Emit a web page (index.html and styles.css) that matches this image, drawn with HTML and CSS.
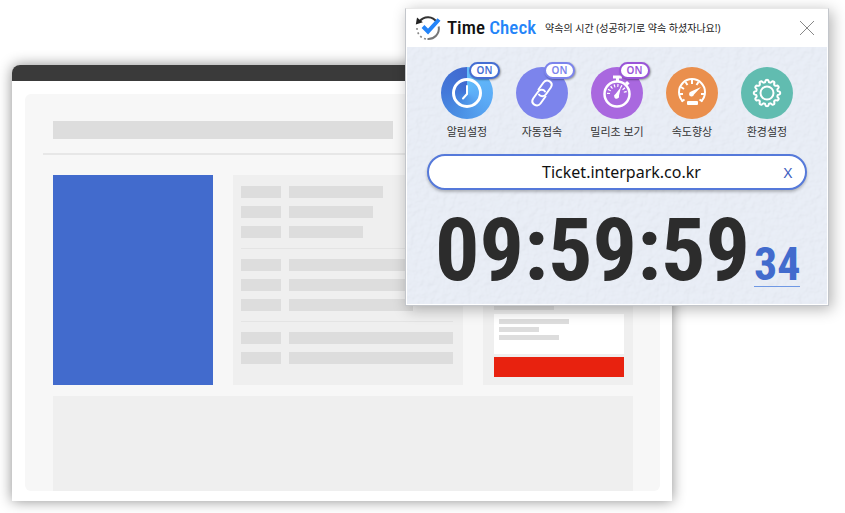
FILE: index.html
```html
<!DOCTYPE html>
<html lang="ko">
<head>
<meta charset="utf-8">
<title>Time Check</title>
<link rel="stylesheet" href="styles.css">
</head>
<body>
<main class="stage">
  <section class="browser" aria-hidden="true">
    <div class="browser-bar"></div>
    <div class="page">
      <div class="page-head"><div class="page-title"></div></div>
      <div class="columns">
        <div class="poster"></div>
        <div class="details">
          <div class="group">
            <div class="row"><i class="key"></i><i class="value w58"></i></div>
            <div class="row"><i class="key"></i><i class="value w52"></i></div>
            <div class="row"><i class="key"></i><i class="value w45"></i></div>
          </div>
          <div class="group">
            <div class="row"><i class="key"></i><i class="value"></i></div>
            <div class="row"><i class="key"></i><i class="value"></i></div>
            <div class="row"><i class="key"></i><i class="value w76"></i></div>
          </div>
          <div class="group">
            <div class="row"><i class="key"></i><i class="value"></i></div>
            <div class="row"><i class="key"></i><i class="value"></i></div>
          </div>
        </div>
        <div class="booking">
          <i class="line line-m"></i>
          <div class="card"><i class="line line-l"></i><i class="line line-s"></i><i class="line line-m"></i></div>
          <div class="reserve"></div>
        </div>
      </div>
      <div class="page-foot"></div>
    </div>
  </section>

  <section class="popup">
    <header class="popup-head">
      <svg class="logo" viewBox="0 0 26 26" fill="none" aria-hidden="true">
        <path d="M4.500 6.500C9 .5 18 1 21.500 7" stroke="#333" stroke-width="2"/>
        <path d="M.8 9.500 2 2.500l5.800 4.700z" fill="#222"/>
        <path d="M23.700 11.500C25 19 19 24.500 12.500 24" stroke="#777" stroke-width="2"/>
        <path d="M11 24C5 23 1.500 18 2 11" stroke="#888" stroke-width="1.600" stroke-dasharray="2 2.500"/>
        <path d="m8 11.500 5 5L24 4.500" stroke="#2484f8" stroke-width="4"/>
      </svg>
      <h1 class="brand">Time <span>Check</span></h1>
      <p class="slogan">약속의 시간 (성공하기로 약속 하셨자나요!)</p>
      <button class="close" type="button" aria-label="닫기">
        <svg viewBox="0 0 16 16" fill="none" stroke="#888" aria-hidden="true"><path d="m1 1 14 14M15 1 1 15"/></svg>
      </button>
    </header>
    <div class="popup-body">
      <svg class="paper" aria-hidden="true">
        <filter id="grain" x="0" y="0" width="100%" height="100%">
          <feTurbulence type="fractalNoise" baseFrequency=".16" numOctaves="3" seed="4" result="noise"/>
          <feDiffuseLighting in="noise" surfaceScale="1" lighting-color="#f4f8ff"><feDistantLight azimuth="225" elevation="68"/></feDiffuseLighting>
        </filter>
        <rect width="100%" height="100%" filter="url(#grain)"/>
      </svg>
      <nav class="tools">
        <button class="tool alarm" type="button">
          <span class="disc">
            <svg viewBox="0 0 52 52" fill="none" stroke="#fff" stroke-width="3" aria-hidden="true"><circle cx="26" cy="26" r="13.500"/><path d="M26 19v8l-4 4.500" stroke-width="2" stroke-linecap="round"/></svg>
            <span class="badge">ON</span>
          </span>
          <span class="label">알림설정</span>
        </button>
        <button class="tool link" type="button">
          <span class="disc">
            <svg viewBox="0 0 52 52" fill="none" stroke="#fff" stroke-width="2" stroke-linecap="round" aria-hidden="true">
              <path d="m22.500 22.500 5-7c3.500-4.500 10.500 0 7.300 5l-5 7c-2 2.500-5.500 2-6.800 0"/>
              <path d="m29.500 29.500-5 7c-3.500 4.500-10.500 0-7.300-5l5-7c2-2.500 5.500-2 6.800 0"/>
            </svg>
            <span class="badge">ON</span>
          </span>
          <span class="label">자동접속</span>
        </button>
        <button class="tool milli" type="button">
          <span class="disc">
            <svg viewBox="0 0 52 52" fill="none" stroke="#fff" aria-hidden="true"><circle cx="26" cy="27" r="12.500" stroke-width="2.500"/><path d="M22 10h9" stroke-width="3"/><path d="M26.500 11v4M35 15l2.500 2.500" stroke-width="3"/><path d="M17.500 27a8.500 8.500 0 0 1 17 0" stroke-width="3" stroke-dasharray="1.200 2.200"/><path d="m30 20-2 8.500a2.500 2.500 0 1 1-3.500-1.500z" fill="#fff" stroke="none"/></svg>
            <span class="badge">ON</span>
          </span>
          <span class="label">밀리초 보기</span>
        </button>
        <button class="tool speed" type="button">
          <span class="disc">
            <svg viewBox="0 0 52 52" fill="none" stroke="#fff" aria-hidden="true"><path d="M17 34.500a13 13 0 1 1 18 0" stroke-width="2"/><path d="M26 13v4M19.500 15l2 3M32.500 15l-2 3M15 20l3 2M13 27h4M39 27h-4M15.500 34.500l3-2M36.500 34.500l-3-2" stroke-width="2"/><path d="m35 20-7 7.500a2.500 2.500 0 1 1-3-3z" fill="#fff" stroke="none"/><rect x="21" y="34" width="11" height="4" rx="1" fill="#fff" stroke="none"/></svg>
          </span>
          <span class="label">속도향상</span>
        </button>
        <button class="tool prefs" type="button">
          <span class="disc">
            <svg viewBox="0 0 52 52" fill="none" stroke="#fff" stroke-width="2" stroke-linejoin="round" aria-hidden="true"><circle cx="26" cy="26" r="6.500"/><path id="gear" d=""/></svg>
          </span>
          <span class="label">환경설정</span>
        </button>
      </nav>
      <form class="address">
        <input class="url" type="text" value="Ticket.interpark.co.kr" aria-label="예매 사이트 주소">
        <button class="clear" type="button" aria-label="주소 지우기">X</button>
      </form>
      <div class="clock"><time class="time">09:59:59</time><span class="centi">34</span></div>
    </div>
  </section>
</main>
<script src="gear.js"></script>
</body>
</html>
```
FILE: gear.js
```js
// Builds the cog outline: twelve rounded teeth around the centre of the 52-unit disc.
const teeth = 12;
const points = [];
for (let i = 0; i < 144; i++) {
  const a = i / 144 * Math.PI * 2;
  const wave = Math.cos(a * teeth);
  const r = 12 + 1.2 * Math.tanh(wave * 2);
  points.push((26 + r * Math.sin(a)).toFixed(2) + ' ' + (26 - r * Math.cos(a)).toFixed(2));
}
document.getElementById('gear').setAttribute('d', 'M' + points.join('L') + 'Z');
```
FILE: styles.css
```css
* { box-sizing: border-box; }
body { margin: 0; background: #fff; font-family: "Noto Sans", "Noto Sans CJK KR", sans-serif; }
button { padding: 0; border: 0; background: none; font: inherit; color: inherit; cursor: pointer; }
.stage { position: relative; padding: 65px 173px 12px 12px; }

.browser { background: #fff; border-radius: 8px 8px 0 0; box-shadow: 0 0 14px rgba(0, 0, 0, .45); padding-bottom: 10px; }
.browser-bar { height: 16px; background: #3a3a3a; border-radius: 8px 8px 0 0; }
.page { margin: 13px 12px 0 13px; padding: 27px 27px 0 28px; background: #f7f7f7; border-radius: 6px; }
.page-head { margin: 0 -10px 20px; padding: 0 10px 14px; border-bottom: 2px solid #e7e7e7; }
.page-title { width: 340px; height: 18px; background: #ddd; }
.columns { display: grid; grid-template-columns: 16fr 23fr 15fr; gap: 20px; height: 210px; }
.poster { background: #426bcd; }
.details { background: #efefef; padding: 11px 10px 0 8px; }
.group { display: grid; gap: 8px; padding-bottom: 10px; margin-bottom: 10px; border-bottom: 1px solid #e4e4e4; }
.group:last-child { border: 0; }
.row { display: flex; gap: 8px; }
.key { width: 40px; height: 12px; background: #ddd; }
.value { flex: 0 1 164px; height: 12px; background: #ddd; }
.w58 { flex-basis: 94px; }
.w52 { flex-basis: 84px; }
.w45 { flex-basis: 74px; }
.w76 { flex-basis: 124px; }
.booking { display: flex; flex-direction: column; justify-content: flex-end; background: #efefef; padding: 0 9px 8px 11px; }
.line { display: block; height: 5px; background: #ddd; }
.line-l { width: 70px; }
.line-m { width: 60px; }
.line-s { width: 40px; }
.card { display: grid; align-content: start; gap: 3px; height: 40px; margin: 4px 0 3px; padding: 5px; background: #fff; }
.reserve { height: 20px; background: #e8220f; }
.page-foot { height: 95px; margin-top: 11px; background: #efefef; }

.popup { position: absolute; top: 8px; left: 405px; right: 16px; background: #fff; border: 1px solid #c3c6cb; border-top-color: #e8e8e8; box-shadow: 3px 3px 14px rgba(0, 0, 0, .3); padding: 0 1px 1px; }
.popup-head { display: flex; align-items: center; height: 38px; padding: 0 12px 0 8px; }
.logo { width: 26px; height: 26px; }
.brand { margin: 0 0 0 6px; font: 500 19px/24px "Roboto Condensed", Roboto, sans-serif; color: #111; }
.brand span { color: #2484f8; }
.slogan { margin: 0 auto 0 9px; font-size: 10px; line-height: 16px; color: #222; white-space: nowrap; }
.close { width: 16px; height: 16px; }
.close svg { display: block; }
.popup-body { position: relative; padding: 20px 20px 6px; background: #e7ecf5; }
.paper { position: absolute; inset: 0; width: 100%; height: 100%; opacity: .25; }
.tools { position: relative; display: grid; grid-template-columns: repeat(5, 75px); justify-content: center; }
.tool { display: flex; flex-direction: column; align-items: center; }
.disc { position: relative; width: 52px; height: 52px; border-radius: 50%; }
.disc svg { display: block; }
.alarm .disc { background: conic-gradient(#62bdfb, #5cabf6 110deg, #4a90e4 200deg, #4379da 270deg, #4169cf 360deg); }
.link .disc { background: #7c84ec; }
.milli .disc { background: #a968df; }
.speed .disc { background: #ea8f4d; }
.prefs .disc { background: #61bcb0; }
.badge { position: absolute; top: -5px; left: 28px; width: 31px; height: 17px; border: 2px solid #456ed3; border-radius: 9px; background: #fff; box-shadow: 1px 1px 2px rgba(0, 0, 0, .35); color: #456ed3; font-size: 10px; line-height: 13px; font-weight: 600; }
.link .badge { border-color: #7c84ec; color: #7c84ec; }
.milli .badge { border-color: #9a55d8; color: #9a55d8; }
.label { margin-top: 5px; font-size: 11px; line-height: 16px; color: #333; white-space: nowrap; }
.address { position: relative; display: flex; align-items: center; height: 36px; margin-top: 14px; border: 2px solid #5579da; border-radius: 18px; background: #fff; box-shadow: 0 2px 3px rgba(0, 0, 0, .25); }
.url { flex: 1; min-width: 0; height: 28px; padding: 0 0 0 40px; border: 0; background: none; text-align: center; font: 16px "Noto Sans", sans-serif; color: #111; outline: 0; }
.clear { width: 28px; margin-right: 3px; color: #3f5fc0; font-size: 15px; }
.clock { position: relative; display: flex; align-items: baseline; gap: 4px; margin: 12px 5px 0 8px; line-height: 96px; font-family: "Roboto Condensed", Roboto, sans-serif; font-weight: 700; }
.time { font-size: 88px; color: #2c2c2c; }
.centi { font-size: 46px; line-height: 44px; color: #426bcd; border-bottom: 1px solid #6f98e4; }
```
